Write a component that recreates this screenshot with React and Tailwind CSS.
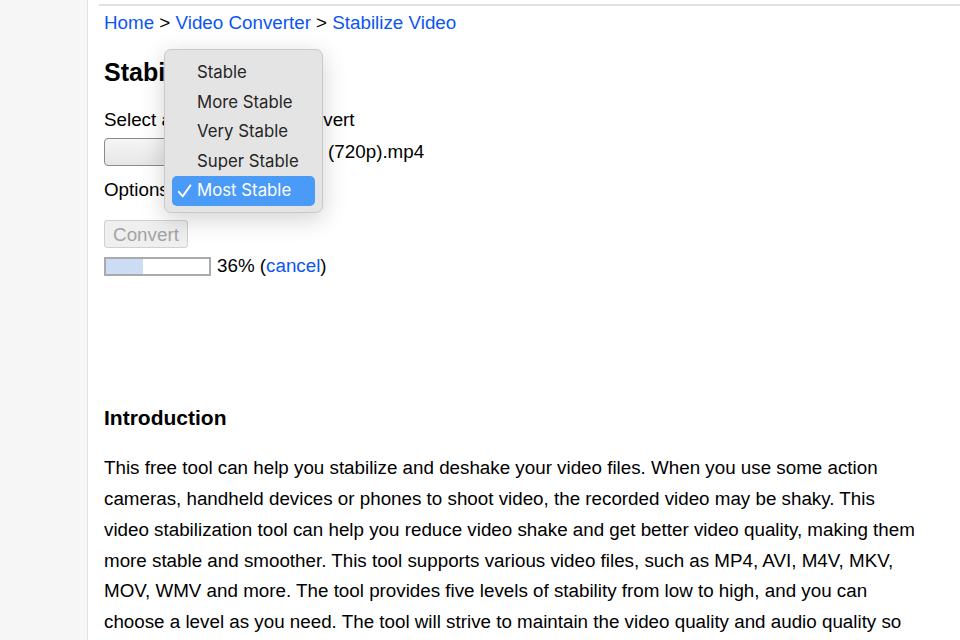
const options = ['Stable', 'More Stable', 'Very Stable', 'Super Stable', 'Most Stable']

const intro =
  'This free tool can help you stabilize and deshake your video files. When you use some action cameras, handheld devices or phones to shoot video, the recorded video may be shaky. This video stabilization tool can help you reduce video shake and get better video quality, making them more stable and smoother. This tool supports various video files, such as MP4, AVI, M4V, MKV, MOV, WMV and more. The tool provides five levels of stability from low to high, and you can choose a level as you need. The tool will strive to maintain the video quality and audio quality so that the output video will look as good as the original.'

function OptionsMenu({ selected }) {
  return (
    <div className="absolute left-[164px] top-[49px] w-[159px] rounded-[7px] border border-[#c9c9c9] bg-[#e4e4e4] pt-[8px] pb-[6px] shadow-[0_6px_24px_rgba(0,0,0,0.18)] font-['Inter','Noto_Sans',sans-serif] text-[16.8px] text-[#262626]">
      {options.map((opt) => {
        const active = opt === selected
        return (
          <div
            key={opt}
            className={
              active
                ? 'relative mx-[7px] flex h-[29.5px] items-center rounded-[5px] bg-[#4a9af7] pl-[25px] text-white'
                : 'relative mx-[7px] flex h-[29.5px] items-center pl-[25px]'
            }
          >
            {active && (
              <svg className="absolute left-[5px] top-[7px] h-[16px] w-[15px]" viewBox="0 0 15 16" fill="none">
                <path d="M1.8 8.8l3.9 4.6L13.4 2.4" stroke="white" strokeWidth="1.9" strokeLinecap="round" strokeLinejoin="round" />
              </svg>
            )}
            {opt}
          </div>
        )
      })}
    </div>
  )
}

export default function App() {
  return (
    <div className="relative flex min-h-[640px] w-full overflow-hidden bg-white font-['Liberation_Sans',Arial,sans-serif] text-[18.8px] text-black">
      {/* sidebar */}
      <div className="w-[88px] shrink-0 border-r border-[#e2e2e2] bg-[#f6f6f6]" />

      {/* main */}
      <div className="ml-[11px] mt-[4px] flex-1 border-t-2 border-[#e1e1e1] pl-[5px]">
        <div className="pt-[4px] leading-[26px]">
          <a className="text-[#0b55f5]">Home</a> &gt; <a className="text-[#0b55f5]">Video Converter</a> &gt;{' '}
          <a className="text-[#0b55f5]">Stabilize Video</a>
        </div>

        <h1 className="mt-[21px] text-[25px] font-bold leading-[30px]">Stabilize Video</h1>

        <p className="mt-[22px] leading-[22px]">Select a video file and convert</p>

        <div className="mt-[7px] flex items-center gap-[6px]">
          <button className="h-[28px] w-[168px] rounded-[4px] border border-[#8a8a8a] bg-gradient-to-b from-[#f6f6f6] to-[#e6e6e6] pl-[62px] text-left text-[15px] whitespace-nowrap">
            Choose File
          </button>
          <span>video (720p).mp4</span>
        </div>

        <div className="mt-[11px] flex items-center gap-[4px] leading-[24px]">
          <span>Options:</span>
          <span className="rounded-[4px] border border-[#aaa] px-[6px] text-[15px]">Most Stable</span>
        </div>

        <button
          disabled
          className="mt-[17px] block h-[28px] w-[84px] rounded-[3px] border border-[#d0d0d0] bg-[#efefef] text-[18.8px] text-[#a3a3a3]"
        >
          Convert
        </button>

        <div className="mt-[8px] flex items-center gap-[6px] leading-[20px]">
          <div className="h-[19px] w-[107px] border-2 border-[#aaaaaa] bg-white">
            <div className="h-full bg-[#cddcf5]" style={{ width: '36%' }} />
          </div>
          <span>
            36% (<a className="text-[#0b55f5]">cancel</a>)
          </span>
        </div>

        <h2 className="mt-[130px] text-[21px] font-bold leading-[24px]">Introduction</h2>

        <p className="mt-[23px] w-[818px] leading-[30.8px]">{intro}</p>
      </div>

      <OptionsMenu selected="Most Stable" />
    </div>
  )
}
